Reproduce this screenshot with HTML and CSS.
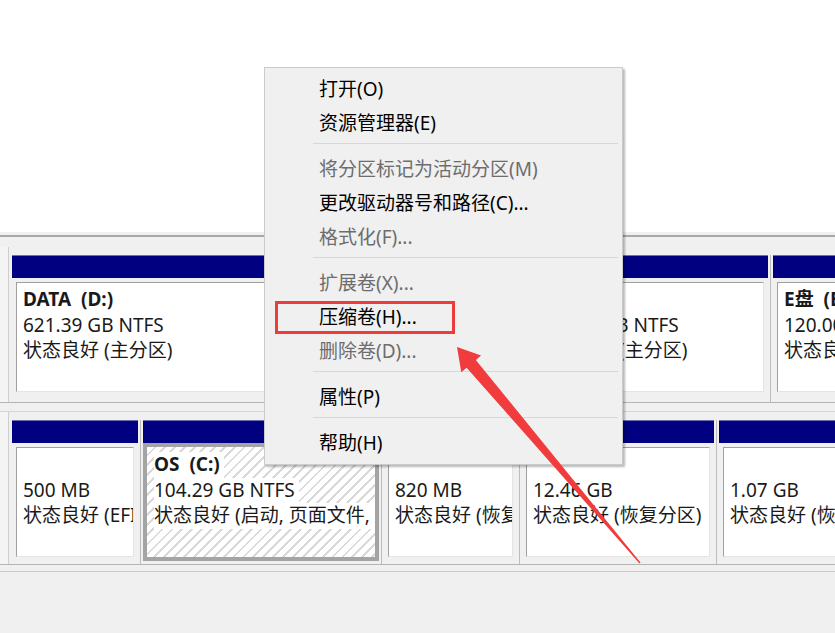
FILE: index.html
```html
<!DOCTYPE html>
<html lang="zh-CN">
<head>
<meta charset="utf-8">
<title>磁盘管理</title>
<link rel="stylesheet" href="styles.css">
</head>
<body>
<div class="top"></div>
<div class="splitter"></div>

<div class="disk row1">
  <div class="stub"></div>
  <div class="parts">
    <div class="part w-data">
      <div class="hdr"></div>
      <div class="body"><div class="box">
        <div class="ln b">DATA  (D:)</div>
        <div class="ln">621.39 GB NTFS</div>
        <div class="ln">状态良好 (主分区)</div>
      </div></div>
    </div>
    <div class="part w-f">
      <div class="hdr"></div>
      <div class="body"><div class="box">
        <div class="ln b">软件 (F:)</div>
        <div class="ln">244.14 GB NTFS</div>
        <div class="ln">状态良好 (主分区)</div>
      </div></div>
    </div>
    <div class="part w-e">
      <div class="hdr"></div>
      <div class="body"><div class="box">
        <div class="ln b">E盘  (E:)</div>
        <div class="ln">120.00 GB NTFS</div>
        <div class="ln">状态良好 (主分区)</div>
      </div></div>
    </div>
  </div>
</div>

<div class="disk row2">
  <div class="stub"></div>
  <div class="parts">
    <div class="part w-efi">
      <div class="hdr"></div>
      <div class="body"><div class="box">
        <div class="ln"> </div>
        <div class="ln">500 MB</div>
        <div class="ln">状态良好 (EFI 系统分区)</div>
      </div></div>
    </div>
    <div class="part w-os sel">
      <div class="hdr"></div>
      <div class="body"><div class="box">
        <div class="ln b">OS  (C:)</div>
        <div class="ln">104.29 GB NTFS</div>
        <div class="ln">状态良好 (启动, 页面文件, 故障转储, 主分区)</div>
      </div></div>
    </div>
    <div class="part w-r1">
      <div class="hdr"></div>
      <div class="body"><div class="box">
        <div class="ln"> </div>
        <div class="ln">820 MB</div>
        <div class="ln">状态良好 (恢复分区)</div>
      </div></div>
    </div>
    <div class="part w-r2">
      <div class="hdr"></div>
      <div class="body"><div class="box">
        <div class="ln"> </div>
        <div class="ln">12.46 GB</div>
        <div class="ln">状态良好 (恢复分区)</div>
      </div></div>
    </div>
    <div class="part w-r3">
      <div class="hdr"></div>
      <div class="body"><div class="box">
        <div class="ln"> </div>
        <div class="ln">1.07 GB</div>
        <div class="ln">状态良好 (恢复分区)</div>
      </div></div>
    </div>
  </div>
</div>
<div class="after"></div>

<div class="menu">
  <div class="item">打开(O)</div>
  <div class="item">资源管理器(E)</div>
  <div class="sep"></div>
  <div class="item off">将分区标记为活动分区(M)</div>
  <div class="item">更改驱动器号和路径(C)...</div>
  <div class="item off">格式化(F)...</div>
  <div class="sep"></div>
  <div class="item off">扩展卷(X)...</div>
  <div class="item">压缩卷(H)...</div>
  <div class="item off">删除卷(D)...</div>
  <div class="sep"></div>
  <div class="item">属性(P)</div>
  <div class="sep"></div>
  <div class="item">帮助(H)</div>
</div>

<div class="mark"></div>
<svg class="arrow" width="835" height="633" viewBox="0 0 835 633">
  <polygon points="457,347 481.1,355.4 475.8,359.9 640.5,562.6 639.5,563.4 466.6,367.7 461.3,372.2" fill="#f03c3c"/>
</svg>
</body>
</html>
```

FILE: styles.css
```css
* { box-sizing: border-box; }
html, body { margin: 0; padding: 0; }
body {
  width: 835px;
  height: 633px;
  overflow: hidden;
  position: relative;
  background: #f0f0f0;
  font-family: "Noto Sans", "Noto Sans CJK SC", sans-serif;
  font-size: 19px;
  color: #1a1a1a;
}
.top { height: 232px; background: #fff; }
.splitter { margin-top: 3px; height: 2px; background: #a8a8a8; margin-bottom: 10px; }

.disk { display: flex; border-bottom: 1px solid #b4b4b4; overflow: hidden; }
.row1 { height: 156px; }
.row2 { height: 154px; margin-top: 8px; border-top: 1px solid #d4d4d4; }
.after { margin-top: 6px; border-top: 1px solid #c8c8c8; }
.stub { width: 9px; flex: none; border-right: 1px solid #cfcfcf; background: #f4f4f4; }
.parts { display: flex; padding: 8px 0 0 3px; flex: none; }
.part { display: flex; flex-direction: column; flex: none; }
.part + .part { margin-left: 2px; border-left: 1px solid #bcbcbc; padding-left: 2px; }

.w-data { width: 510px; }
.w-f { width: 244px; }
.w-e { width: 220px; }
.w-efi { width: 126px; }
.w-os { width: 239px; }
.w-r1 { width: 136px; }
.w-r2 { width: 195px; }
.w-r3 { width: 180px; }

.hdr { height: 23px; background: #000080; border-top: 1px solid #6e6eb4; }
.body { height: 118px; padding: 4px; background: #f0f0f0; }
.box {
  height: 100%;
  background: #fff;
  border-top: 1px solid #a0a0a0;
  border-left: 1px solid #a0a0a0;
  border-right: 1px solid #e4e4e4;
  border-bottom: 1px solid #e4e4e4;
  padding: 4px 0 0 6px;
  overflow: hidden;
  line-height: 25.5px;
}
.ln { height: 25.5px; white-space: pre; }
.b { font-weight: 700; }

.sel .body { padding: 0; border: 4px solid #a4a4a4; }
.sel .box {
  border: none;
  padding: 5px 0 0 7px;
  background: repeating-linear-gradient(135deg, #fff 0 5px, #d9d9d9 5px 7px);
}
.sel .ln { background: #fff; width: max-content; padding-right: 4px; }

.menu {
  position: absolute;
  left: 264px;
  top: 67px;
  width: 359px;
  background: #f0f0f0;
  border: 1px solid #cbcbcb;
  box-shadow: 2px 2px 2px rgba(0, 0, 0, 0.28);
  padding: 4px 0;
  font-size: 19px;
  color: #000;
}
.item { height: 34px; line-height: 34px; padding-left: 54px; white-space: nowrap; }
.item.off { color: #6d6d6d; }
.sep { height: 12px; padding-top: 3px; }
.sep::before { content: ""; display: block; height: 1px; background: #d7d7d7; margin: 0 4px 0 48px; }

.mark {
  position: absolute;
  left: 275px;
  top: 301px;
  width: 180px;
  height: 33px;
  border: 3px solid #ee3b3b;
}
.arrow { position: absolute; left: 0; top: 0; pointer-events: none; }
```
